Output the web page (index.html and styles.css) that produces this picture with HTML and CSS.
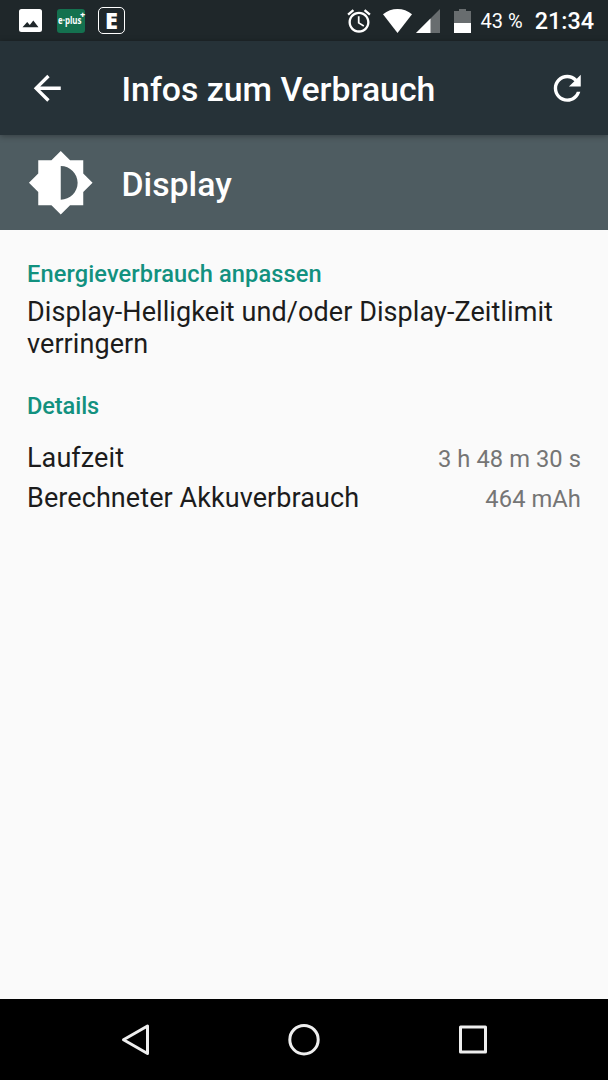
FILE: index.html
```html
<!DOCTYPE html>
<html lang="de">
<head>
    <meta charset="UTF-8">
    <meta name="viewport" content="width=device-width, initial-scale=1.0">
    <title>Infos zum Verbrauch</title>
    <link rel="stylesheet" href="styles.css">
</head>
<body>
    <div class="status-bar">
        <div class="notifications">
            <svg class="icon-picture" viewBox="0 0 23 23">
                <path fill="#fff" fill-rule="evenodd" d="M2.500 0h18A2.500 2.500 0 0 1 23 2.500v18a2.500 2.500 0 0 1-2.500 2.500h-18A2.500 2.500 0 0 1 0 20.500v-18A2.500 2.500 0 0 1 2.500 0zM3.500 18.200h16l-5.200-6.600-3.500 4.400-2.600-2.900z"/>
            </svg>
            <div class="eplus"><span class="eplus-name">e·plus</span><span class="eplus-sign">+</span></div>
            <div class="letter-box">E</div>
        </div>
        <div class="system-icons">
            <svg class="icon-alarm" viewBox="0 0 24 24">
                <path fill="#fff" d="M22 5.720l-4.600-3.860-1.290 1.530 4.600 3.860L22 5.720zM7.880 3.390L6.600 1.860 2 5.710l1.290 1.530 4.590-3.850zM12.500 8H11v6l4.750 2.850.750-1.230-4-2.370V8zM12 4c-4.970 0-9 4.030-9 9s4.020 9 9 9c4.970 0 9-4.030 9-9s-4.030-9-9-9zm0 16c-3.870 0-7-3.130-7-7s3.130-7 7-7 7 3.130 7 7-3.130 7-7 7z"/>
            </svg>
            <svg class="icon-wifi" viewBox="0 0 29 24">
                <path fill="#fff" d="M14.500 24L0 5.200Q6.500 0 14.500 0T29 5.200z"/>
            </svg>
            <svg class="icon-signal" viewBox="0 0 24 24">
                <path fill="#686d6f" d="M24 0v24H0z"/>
                <path fill="#fff" d="M14.500 9.500V24H0z"/>
            </svg>
            <svg class="icon-battery" viewBox="0 0 17 24">
                <path fill="#686d6f" d="M5 0h7v2h5v22H0V2h5z"/>
                <path fill="#fff" d="M0 14h17v10H0z"/>
            </svg>
            <span class="battery-level">43 %</span>
            <span class="clock">21:34</span>
        </div>
    </div>

    <header class="app-bar">
        <svg class="icon-back" viewBox="0 0 24 24">
            <path fill="#fff" d="M20 11H7.830l5.590-5.590L12 4l-8 8 8 8 1.410-1.410L7.830 13H20v-2z"/>
        </svg>
        <h1>Infos zum Verbrauch</h1>
        <svg class="icon-refresh" viewBox="0 0 24 24">
            <path fill="#fff" d="M17.650 6.350C16.200 4.900 14.210 4 12 4c-4.420 0-7.990 3.580-7.990 8s3.570 8 7.990 8c3.730 0 6.840-2.550 7.730-6h-2.080c-.820 2.330-3.040 4-5.650 4-3.310 0-6-2.690-6-6s2.690-6 6-6c1.660 0 3.140.690 4.220 1.780L13 11h7V4l-2.350 2.350z"/>
        </svg>
    </header>

    <div class="entity">
        <svg class="icon-brightness" viewBox="0 0 24 24">
            <path fill="#fff" d="M20 15.310L23.310 12 20 8.690V4h-4.690L12 .690 8.690 4H4v4.690L.690 12 4 15.310V20h4.690L12 23.310 15.310 20H20v-4.690zM12 18V6c3.310 0 6 2.690 6 6s-2.690 6-6 6z"/>
        </svg>
        <h2>Display</h2>
    </div>

    <main>
        <h3>Energieverbrauch anpassen</h3>
        <p class="hint">Display-Helligkeit und/oder Display-Zeitlimit verringern</p>

        <h3 class="details-title">Details</h3>
        <div class="row">
            <span>Laufzeit</span>
            <span class="value">3 h 48 m 30 s</span>
        </div>
        <div class="row">
            <span>Berechneter Akkuverbrauch</span>
            <span class="value">464 mAh</span>
        </div>
    </main>

    <nav class="nav-bar">
        <svg class="nav-icon" viewBox="0 0 36 36">
            <path d="M30.500 4v27.500L6.500 17.800z"/>
        </svg>
        <svg class="nav-icon" viewBox="0 0 36 36">
            <circle cx="18" cy="17.700" r="14.200"/>
        </svg>
        <svg class="nav-icon" viewBox="0 0 36 36">
            <rect x="5.500" y="5" width="25" height="25"/>
        </svg>
    </nav>
</body>
</html>
```
FILE: styles.css
```css
* {
    box-sizing: border-box;
}

body {
    font-family: Roboto, "Liberation Sans", sans-serif;
    margin: 0;
    height: 1080px;
    display: flex;
    flex-direction: column;
    background-color: #fafafa;
    color: #1c1c1c;
    overflow: hidden;
}

h1, h2, h3, p {
    margin: 0;
    font-weight: 500;
}

svg {
    display: block;
    flex: none;
}

/* Status bar */
.status-bar {
    height: 41px;
    flex: none;
    display: flex;
    justify-content: space-between;
    align-items: center;
    padding: 0 14px 0 19px;
    background-color: #1f272a;
    color: #fff;
}

.notifications, .system-icons {
    display: flex;
    align-items: center;
}

.icon-picture {
    width: 23px;
    height: 23px;
}

.eplus {
    display: flex;
    width: 28px;
    height: 24px;
    margin-left: 15px;
    padding-left: 1px;
    border-radius: 3px;
    background-color: #14714f;
    font-family: "Open Sans", sans-serif;
    font-weight: 700;
    white-space: nowrap;
}

.eplus-name {
    width: 22px;
    font-size: 11px;
    line-height: 21px;
    transform: scaleX(0.72);
    transform-origin: left;
}

.eplus-sign {
    font-size: 9px;
    line-height: 11px;
    font-weight: 800;
}

.letter-box {
    width: 27px;
    height: 27px;
    margin-left: 13px;
    border: 1.5px solid #fff;
    border-radius: 5px;
    font: 800 23.5px/25px "Open Sans", sans-serif;
    text-align: center;
}

.icon-alarm {
    width: 28px;
    height: 28px;
}

.icon-wifi {
    width: 29px;
    height: 24px;
    margin-left: 10px;
}

.icon-signal {
    width: 24px;
    height: 24px;
    margin-left: 4px;
}

.icon-battery {
    width: 17px;
    height: 24px;
    margin-left: 14px;
}

.battery-level {
    margin-left: 10px;
    font-size: 20px;
}

.clock {
    margin-left: 12px;
    font-size: 23.4px;
    font-weight: 500;
}

/* App bar */
.app-bar {
    height: 94px;
    flex: none;
    display: flex;
    align-items: center;
    padding: 0 21px 0 27px;
    background-color: #263238;
    color: #fff;
    box-shadow: 0 1px 6px rgba(0, 0, 0, 0.35);
    z-index: 1;
}

.icon-back, .icon-refresh {
    width: 40.5px;
    height: 40.5px;
}

.app-bar h1 {
    flex: 1;
    margin-left: 54px;
    padding-top: 3px;
    font-size: 33.8px;
}

.entity {
    height: 95px;
    flex: none;
    display: flex;
    align-items: center;
    padding-left: 27px;
    background-color: #4e5c61;
    color: #fff;
}

.icon-brightness {
    width: 67.5px;
    height: 67.5px;
}

.entity h2 {
    margin-left: 27px;
    padding-top: 3px;
    font-size: 33.8px;
}

/* Content */
main {
    flex: 1;
    padding: 30px 27px 0;
}

h3 {
    font-size: 23.6px;
    line-height: 28px;
    letter-spacing: 0.12px;
    color: #12917f;
}

.hint {
    margin-top: 8px;
    font-size: 27px;
    font-weight: 400;
    line-height: 32px;
    letter-spacing: 0.08px;
}

.details-title {
    margin: 32px 0 18px;
    letter-spacing: -0.1px;
}

.row {
    display: flex;
    justify-content: space-between;
    align-items: baseline;
    height: 40px;
    font-size: 27px;
    line-height: 40px;
    letter-spacing: 0.08px;
}

.value {
    font-size: 23.7px;
    color: #757575;
}

/* Navigation bar */
.nav-bar {
    height: 81px;
    flex: none;
    display: flex;
    justify-content: center;
    align-items: center;
    gap: 133px;
    background-color: #000;
}

.nav-icon {
    width: 36px;
    height: 36px;
    fill: none;
    stroke: #eee;
    stroke-width: 3;
    stroke-linejoin: round;
}
```
